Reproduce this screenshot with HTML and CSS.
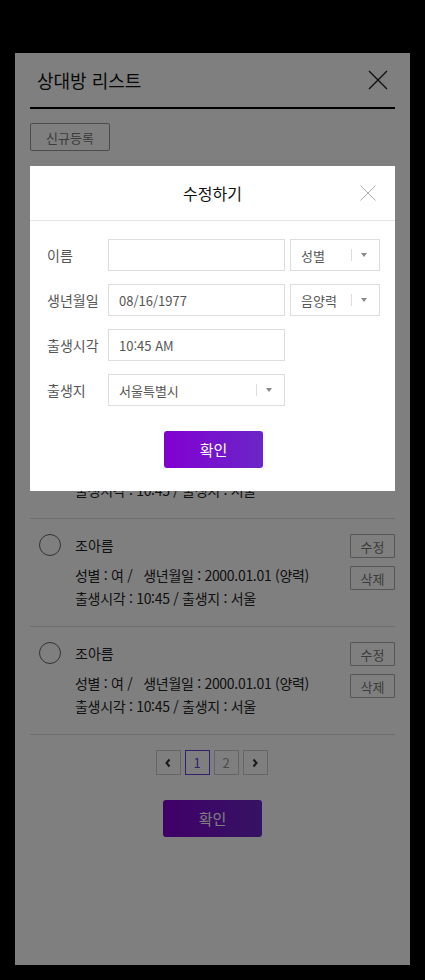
FILE: index.html
```html
<!DOCTYPE html>
<html lang="ko">
<head>
    <meta charset="UTF-8" />
    <meta name="viewport" content="width=device-width, initial-scale=1.0" />
    <title>상대방 리스트</title>
    <link rel="stylesheet" href="styles.css">
</head>
<body>
    <div class="panel">
        <div class="panel-head">
            <h1>상대방 리스트</h1>
            <button class="icon-btn close" aria-label="닫기">
                <svg width="20" height="20" viewBox="0 0 20 20"><path d="M1 1L19 19M19 1L1 19" stroke="#222" stroke-width="1.4" fill="none"/></svg>
            </button>
        </div>

        <button class="btn-new">신규등록</button>

        <ul class="list">
            <li class="item">
                <span class="radio"></span>
                <div class="info">
                    <div class="name">조아름</div>
                    <div class="meta">성별 : 여 /&nbsp;&nbsp; 생년월일 : 2000.01.01 (양력)<br>출생시각 : 10:45 / 출생지 : 서울</div>
                </div>
                <div class="actions"><button>수정</button><button>삭제</button></div>
            </li>
            <li class="item">
                <span class="radio"></span>
                <div class="info">
                    <div class="name">조아름</div>
                    <div class="meta">성별 : 여 /&nbsp;&nbsp; 생년월일 : 2000.01.01 (양력)<br>출생시각 : 10:45 / 출생지 : 서울</div>
                </div>
                <div class="actions"><button>수정</button><button>삭제</button></div>
            </li>
            <li class="item">
                <span class="radio"></span>
                <div class="info">
                    <div class="name">조아름</div>
                    <div class="meta">성별 : 여 /&nbsp;&nbsp; 생년월일 : 2000.01.01 (양력)<br>출생시각 : 10:45 / 출생지 : 서울</div>
                </div>
                <div class="actions"><button>수정</button><button>삭제</button></div>
            </li>
            <li class="item">
                <span class="radio"></span>
                <div class="info">
                    <div class="name">조아름</div>
                    <div class="meta">성별 : 여 /&nbsp;&nbsp; 생년월일 : 2000.01.01 (양력)<br>출생시각 : 10:45 / 출생지 : 서울</div>
                </div>
                <div class="actions"><button>수정</button><button>삭제</button></div>
            </li>
            <li class="item">
                <span class="radio"></span>
                <div class="info">
                    <div class="name">조아름</div>
                    <div class="meta">성별 : 여 /&nbsp;&nbsp; 생년월일 : 2000.01.01 (양력)<br>출생시각 : 10:45 / 출생지 : 서울</div>
                </div>
                <div class="actions"><button>수정</button><button>삭제</button></div>
            </li>
        </ul>

        <div class="pager">
            <a class="page arrow" href="#"><svg width="8" height="10" viewBox="0 0 8 10"><path d="M5.5 1.5L2.5 5L5.5 8.5" stroke="#333" stroke-width="2" fill="none"/></svg></a>
            <a class="page on" href="#">1</a>
            <a class="page" href="#">2</a>
            <a class="page arrow" href="#"><svg width="8" height="10" viewBox="0 0 8 10"><path d="M2.5 1.5L5.5 5L2.5 8.5" stroke="#333" stroke-width="2" fill="none"/></svg></a>
        </div>

        <button class="btn-confirm">확인</button>
    </div>

    <div class="dim"></div>

    <div class="modal">
        <div class="modal-head">
            <h2>수정하기</h2>
            <button class="icon-btn modal-close" aria-label="닫기">
                <svg width="16" height="16" viewBox="0 0 16 16"><path d="M0.5 0.5L15.5 15.5M15.5 0.5L0.5 15.5" stroke="#aaa" stroke-width="1" fill="none"/></svg>
            </button>
        </div>
        <div class="modal-body">
            <div class="form">
                <div class="row">
                    <label>이름</label>
                    <div class="field"></div>
                    <div class="field select small"><span>성별</span><i class="sep"></i><i class="caret"></i></div>
                </div>
                <div class="row">
                    <label>생년월일</label>
                    <div class="field">08/16/1977</div>
                    <div class="field select small"><span>음양력</span><i class="sep"></i><i class="caret"></i></div>
                </div>
                <div class="row">
                    <label>출생시각</label>
                    <div class="field">10:45 AM</div>
                </div>
                <div class="row">
                    <label>출생지</label>
                    <div class="field select"><span>서울특별시</span><i class="sep"></i><i class="caret"></i></div>
                </div>
            </div>
            <button class="btn-confirm">확인</button>
        </div>
    </div>
</body>
</html>
```

FILE: styles.css
```css
* {
    box-sizing: border-box;
}

body {
    margin: 0;
    background: #000;
    font-family: "Noto Sans CJK KR", "Noto Sans", sans-serif;
    color: #222;
}

button {
    font-family: inherit;
    cursor: pointer;
}

.icon-btn {
    background: none;
    border: none;
    padding: 0;
    display: flex;
}

/* list panel (behind the dim layer) */
.panel {
    margin: 53px 15px 0;
    height: 912px;
    background: #fff;
    padding: 0 15px;
}

.panel-head {
    height: 56px;
    display: flex;
    align-items: center;
    justify-content: space-between;
    padding: 0 7px;
    border-bottom: 2px solid #000;
}

.panel-head h1 {
    margin: 0;
    font-size: 18px;
    font-weight: 400;
    color: #111;
}

.btn-new {
    display: block;
    margin-top: 14px;
    width: 80px;
    height: 28px;
    padding: 0;
    background: #fff;
    border: 1px solid #999;
    border-radius: 2px;
    color: #777;
    font-size: 13px;
}

.list {
    list-style: none;
    margin: 43px 0 0;
    padding: 0;
    border-top: 1px solid #ddd;
}

.item {
    display: flex;
    align-items: flex-start;
    padding: 14px 0 16px 9px;
    border-bottom: 1px solid #ddd;
}

.radio {
    flex: none;
    width: 22px;
    height: 22px;
    margin-top: 1px;
    border: 1.5px solid #666;
    border-radius: 50%;
}

.info {
    flex: 1;
    margin-left: 14px;
}

.name {
    font-size: 14px;
    line-height: 24px;
}

.meta {
    margin-top: 7px;
    font-size: 14px;
    line-height: 23px;
    letter-spacing: -0.3px;
}

.actions {
    display: flex;
    flex-direction: column;
    gap: 8px;
    margin-top: 1px;
}

.actions button {
    width: 45px;
    height: 24px;
    padding: 0;
    background: #fff;
    border: 1px solid #aaa;
    border-radius: 1px;
    color: #777;
    font-size: 13px;
}

.pager {
    display: flex;
    justify-content: center;
    gap: 4px;
    margin-top: 15px;
    padding-right: 2px;
}

.page {
    width: 25px;
    height: 25px;
    display: flex;
    align-items: center;
    justify-content: center;
    border: 1px solid #ccc;
    color: #999;
    font-size: 13px;
    text-decoration: none;
}

.page.on {
    border-color: #6a3be0;
    color: #6a3be0;
}

.btn-confirm {
    display: block;
    margin: 25px auto 0;
    width: 99px;
    height: 37px;
    padding: 0;
    border: none;
    border-radius: 3px;
    background: linear-gradient(90deg, #8200d2, #6a26c6);
    color: #fff;
    font-size: 15px;
}

.dim {
    position: fixed;
    inset: 0;
    background: rgba(0, 0, 0, 0.5);
}

/* edit modal */
.modal {
    position: absolute;
    top: 166px;
    left: 30px;
    width: 365px;
    height: 325px;
    background: #fff;
}

.modal-head {
    position: relative;
    height: 55px;
    display: flex;
    align-items: center;
    justify-content: center;
    border-bottom: 1px solid #e3e3e3;
}

.modal-head h2 {
    margin: 0;
    font-size: 16px;
    font-weight: 400;
    color: #111;
}

.modal-close {
    position: absolute;
    top: 19px;
    right: 19px;
}

.modal-body {
    padding: 18px 15px 0 17px;
}

.form {
    display: flex;
    flex-direction: column;
    gap: 13px;
}

.row {
    display: flex;
    align-items: center;
    gap: 5px;
}

.row label {
    flex: none;
    width: 56px;
    font-size: 14px;
    color: #555;
}

.field {
    width: 177px;
    height: 32px;
    display: flex;
    align-items: center;
    padding: 0 10px;
    border: 1px solid #ddd;
    font-size: 13px;
    color: #555;
}

.select {
    padding-right: 12px;
}

.select.small {
    width: 90px;
}

.sep {
    width: 1px;
    height: 12px;
    margin-left: auto;
    background: #ddd;
}

.caret {
    margin-left: 9px;
    border-left: 3.5px solid transparent;
    border-right: 3.5px solid transparent;
    border-top: 4px solid #888;
}
```
